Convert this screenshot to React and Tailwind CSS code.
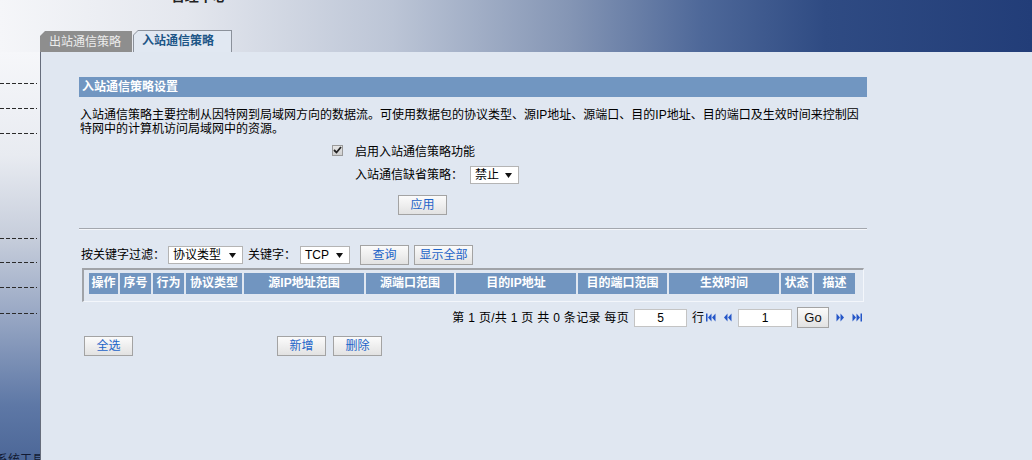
import React from "react";

const font = "[font-family:'Liberation_Sans','Noto_Sans_CJK_SC',sans-serif]";

const Arrow = () => (
  <svg width="7" height="5" viewBox="0 0 7 5" className="shrink-0">
    <path d="M0 0 H7 L3.5 5 Z" fill="#111" />
  </svg>
);

const Select = ({ value, width }) => (
  <div
    className={`flex items-center justify-between h-[18px] bg-white border border-[#b4b4b4] pl-[4px] pr-[6px] leading-[16px] ${width}`}
  >
    <span>{value}</span>
    <Arrow />
  </div>
);

const Btn = ({ children, width = "w-[49px]", className = "" }) => (
  <button
    className={`h-[20px] ${width} border border-[#a3a3a3] bg-[linear-gradient(to_bottom,#fbfbfb,#e2e2e2)] text-[#1d64c8] text-[12px] leading-[18px] text-center ${className}`}
  >
    {children}
  </button>
);

const NavIcon = ({ dir, bar }) => (
  <svg width="10" height="9" viewBox="0 0 10 9" className="shrink-0">
    {dir === "left" ? (
      <g fill="#2456c8">
        {bar && <rect x="0" y="0.5" width="1.5" height="8" />}
        <path d={bar ? "M5.5 0.5 L2 4.5 L5.5 8.5 Z" : "M4.5 0.5 L1 4.5 L4.5 8.5 Z"} />
        <path d={bar ? "M9.5 0.5 L6 4.5 L9.5 8.5 Z" : "M8.5 0.5 L5 4.5 L8.5 8.5 Z"} />
      </g>
    ) : (
      <g fill="#2456c8">
        <path d={bar ? "M0.5 0.5 L4 4.5 L0.5 8.5 Z" : "M1.5 0.5 L5 4.5 L1.5 8.5 Z"} />
        <path d={bar ? "M4.5 0.5 L8 4.5 L4.5 8.5 Z" : "M5.5 0.5 L9 4.5 L5.5 8.5 Z"} />
        {bar && <rect x="8.5" y="0.5" width="1.5" height="8" />}
      </g>
    )}
  </svg>
);

const columns = [
  ["操作", "w-[29px]"],
  ["序号", "w-[31px]"],
  ["行为", "w-[31px]"],
  ["协议类型", "w-[56px]"],
  ["源IP地址范围", "w-[120px]"],
  ["源端口范围", "w-[88px]"],
  ["目的IP地址", "w-[120px]"],
  ["目的端口范围", "w-[89px]"],
  ["生效时间", "w-[110px]"],
  ["状态", "w-[31px]"],
  ["描述", "w-[41px]"],
];

const dash =
  "h-px w-[37px] bg-[repeating-linear-gradient(to_right,#2a2a2a_0_4px,transparent_4px_6px)]";

export default function App() {
  return (
    <div className={`w-[1032px] h-[460px] overflow-hidden flex flex-col text-[12px] text-black ${font}`}>
      {/* top band */}
      <div className="h-[52px] shrink-0 flex flex-col bg-[linear-gradient(to_right,#f5f6f9_0%,#e4e7ee_18%,#bcc5d6_38%,#8596b5_55%,#4e6899_68%,#2f4b83_80%,#223d78_100%)]">
        <div className="-mt-[11px] pl-[162px] h-[14px] font-bold text-[14px] leading-[14px] text-[#222]">
          • 管理中心
        </div>
        <div className="mt-auto flex items-end pl-[40px]">
          <div className="h-[21px] w-[92px] bg-[#8e8e8e] text-[#ececec] pl-[9px] leading-[22px] [clip-path:polygon(5px_0,100%_0,100%_100%,0_100%,0_5px)]">
            出站通信策略
          </div>
          <div className="ml-[1px] h-[22px] w-[99px] bg-[#8b919b] pt-px px-px [clip-path:polygon(5px_0,100%_0,100%_100%,0_100%,0_5px)]">
            <div className="h-full bg-[#e1e8f2] pl-[8px] leading-[21px] font-bold text-[#1d5687] [clip-path:polygon(4px_0,100%_0,100%_100%,0_100%,0_4px)]">
              入站通信策略
            </div>
          </div>
        </div>
      </div>

      <div className="flex flex-1">
        {/* sidebar */}
        <div className="w-[41px] shrink-0 border-r border-[#666d7c] bg-[linear-gradient(to_bottom,#f6f7fa_0%,#e8ebf1_25%,#c6cddb_45%,#94a4c2_65%,#5e78a6_85%,#4a6596_100%)] overflow-hidden">
          <div className={`${dash} mt-[31px]`} />
          <div className={`${dash} mt-[24px]`} />
          <div className={`${dash} mt-[24px]`} />
          <div className={`${dash} mt-[104px]`} />
          <div className={`${dash} mt-[23px]`} />
          <div className={`${dash} mt-[24px]`} />
          <div className={`${dash} mt-[25px]`} />
          <div className="mt-[139px] -ml-[4px] whitespace-nowrap leading-[14px] text-[#111a33]">系统工具</div>
        </div>

        {/* panel */}
        <div className="flex-1 bg-[#e0e7f1] pl-[38px] pt-[25px]">
          <div className="w-[788px]">
            <div className="h-[20px] bg-[#7196c1] text-white font-bold pl-[3px] leading-[20px]">
              入站通信策略设置
            </div>
            <p className="mt-[11px] pl-[1px] leading-[14px] whitespace-nowrap">
              入站通信策略主要控制从因特网到局域网方向的数据流。可使用数据包的协议类型、源IP地址、源端口、目的IP地址、目的端口及生效时间来控制因
              <br />
              特网中的计算机访问局域网中的资源。
            </p>

            <div className="mt-[5px] h-[18px] flex items-center pl-[253px]">
              <span className="w-[11px] h-[11px] border border-[#9a9a9a] bg-[linear-gradient(to_bottom,#e6e6e6,#cfcfcf)] flex items-center justify-center">
                <svg width="9" height="8" viewBox="0 0 9 8">
                  <path d="M1 4 L3.5 6.5 L8 1" stroke="#222" strokeWidth="1.8" fill="none" />
                </svg>
              </span>
              <span className="ml-[12px] mt-[3px] leading-[14px]">启用入站通信策略功能</span>
            </div>

            <div className="mt-[7px] h-[18px] flex items-center pl-[276px]">
              <span className="leading-[14px] w-[115px]">入站通信缺省策略：</span>
              <Select value="禁止" width="w-[49px]" />
            </div>

            <div className="mt-[11px] pl-[319px] flex">
              <Btn>应用</Btn>
            </div>

            <div className="mt-[13px] border-t border-[#a3a7ae] border-b border-b-[#f4f6fa]" />

            <div className="mt-[15px] h-[20px] flex items-center pl-[2px]">
              <span className="leading-[14px]">按关键字过滤：</span>
              <Select value="协议类型" width="ml-[3px] w-[75px]" />
              <span className="ml-[5px] leading-[14px]">关键字：</span>
              <Select value="TCP" width="ml-[4px] w-[50px]" />
              <Btn className="ml-[10px]">查询</Btn>
              <Btn width="w-[59px]" className="ml-[5px]">
                显示全部
              </Btn>
            </div>

            <div className="mt-[3px] ml-[3px] w-[782px] h-[34px] border-t-2 border-l-2 border-[#a0a3a8] border-r border-b border-r-[#f3f6fb] border-b-[#f3f6fb] pl-[5px] pt-[3px]">
              <div className="flex gap-[2px]">
                {columns.map(([label, w]) => (
                  <div
                    key={label}
                    className={`${w} h-[21px] bg-[#7195c0] text-white font-bold text-center leading-[21px] whitespace-nowrap`}
                  >
                    {label}
                  </div>
                ))}
              </div>
            </div>

            <div className="mt-[5px] h-[21px] flex items-center justify-end pr-[5px]">
              <span className="leading-[14px] whitespace-nowrap tracking-[0.3px]">第 1 页/共 1 页 共 0 条记录 每页</span>
              <div className="ml-[5px] w-[53px] h-[18px] bg-white border border-[#c4c4c4] text-center leading-[16px]">5</div>
              <span className="ml-[5px] leading-[14px]">行</span>
              <span className="ml-[2px] flex"><NavIcon dir="left" bar /></span>
              <span className="ml-[7px] flex"><NavIcon dir="left" /></span>
              <div className="ml-[5px] w-[54px] h-[18px] bg-white border border-[#c4c4c4] text-center leading-[16px]">1</div>
              <button className="ml-[5px] w-[32px] h-[21px] border border-[#a3a3a3] bg-[linear-gradient(to_bottom,#fbfbfb,#e2e2e2)] text-[13px] leading-[19px] text-[#111]">
                Go
              </button>
              <span className="ml-[6px] flex"><NavIcon dir="right" /></span>
              <span className="ml-[7px] flex"><NavIcon dir="right" bar /></span>
            </div>

            <div className="mt-[8px] flex pl-[5px]">
              <Btn>全选</Btn>
              <Btn className="ml-[144px]">新增</Btn>
              <Btn className="ml-[7px]">删除</Btn>
            </div>
          </div>
        </div>
      </div>
    </div>
  );
}
